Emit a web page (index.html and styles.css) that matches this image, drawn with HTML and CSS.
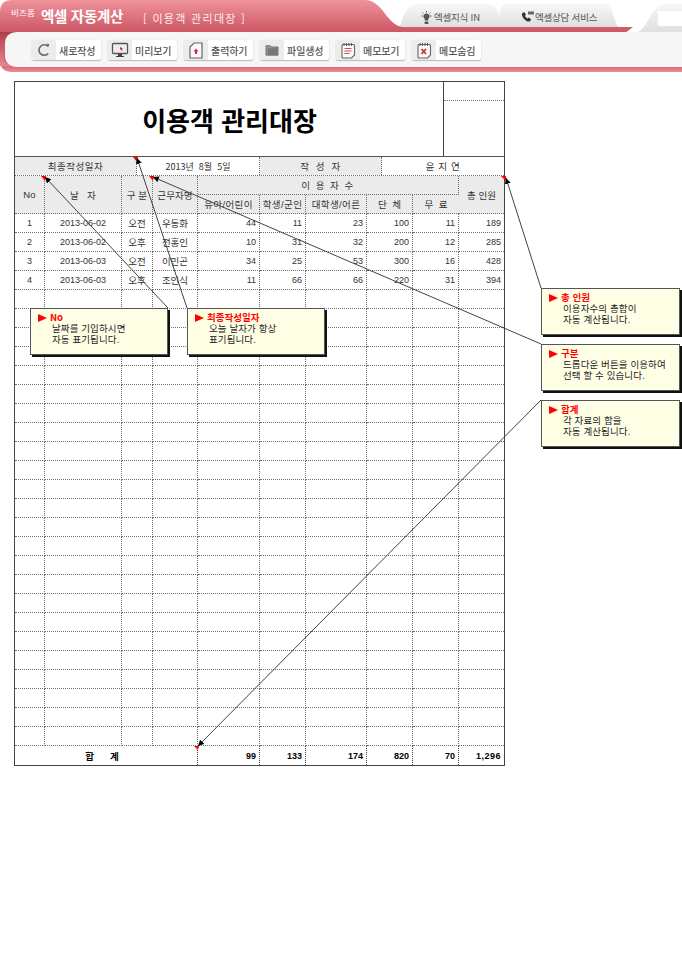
FILE: index.html
```html
<!DOCTYPE html>
<html lang="ko">
<head>
<meta charset="utf-8">
<title>이용객 관리대장</title>
<link rel="stylesheet" href="styles.css">
</head>
<body>
<header class="top">
  <svg class="top-bg" width="682" height="72" viewBox="0 0 682 72">
    <defs>
      <linearGradient id="red" x1="0" y1="0" x2="0" y2="1">
        <stop offset="0" stop-color="#f0939b"/>
        <stop offset="0.42" stop-color="#cd5a66"/>
        <stop offset="0.9" stop-color="#d4626d"/>
        <stop offset="1" stop-color="#e98d95"/>
      </linearGradient>
      <linearGradient id="tab" x1="0" y1="0" x2="0" y2="1">
        <stop offset="0" stop-color="#f8f8f8"/>
        <stop offset="1" stop-color="#dfdfdf"/>
      </linearGradient>
      <linearGradient id="edge" x1="0" y1="0" x2="0" y2="1">
        <stop offset="0" stop-color="#ad3f4a"/>
        <stop offset="1" stop-color="#e58790"/>
      </linearGradient>
    </defs>
    <path d="M635 33 C650 30 648 4 668 4 H682 V33 Z" fill="url(#tab)"/>
    <path d="M398 27 C403 26 402 6 416 4 H490 C498 5 497 12 505 27 Z" fill="url(#tab)"/>
    <path d="M502 27 C499 12 498 7 506 4 H606 C612 5 614 20 618 27 Z" fill="url(#tab)"/>
    <path d="M12 0 H366 C384 2 386 24 402 27 H633 L625 33 H682 V72 H12 Q0 72 0 60 V12 Q0 0 12 0 Z" fill="url(#red)"/>
    <path d="M0 32 H18 Q4 33 4 46 V58 Q4 66 18 66 H0 Z" fill="url(#edge)"/>
    <path d="M18 32 H682 V67 H18 Q5 67 5 55 V44 Q5 32 18 32 Z" fill="#f5f6f5"/>
  </svg>
  <div class="top-row">
    <span class="brand-small">비즈폼</span>
    <strong class="brand">엑셀 자동계산</strong>
    <span class="page-name">[ 이용객 관리대장 ]</span>
    <nav class="tabs">
      <a class="tab tab-first">
        <svg width="11" height="13" viewBox="0 0 11 13"><path d="M5.5 2.5a3 3 0 0 0-1.7 5.5v1.5h3.4V8a3 3 0 0 0-1.700-5.500Z" fill="#555"/><path d="M4 11h3v1.500H4ZM5.500 0v1.500M0.500 5h1.500M9 5h1.500M1.500 1.500l1 1M9.500 1.500l-1 1" stroke="#555" fill="#555"/></svg>
        엑셀지식 IN
      </a>
      <a class="tab tab-second">
        <svg width="14" height="12" viewBox="0 0 14 12"><path d="M1 2.500 3 1l2 2.500-1 1.200c.6 1.300 1.400 2.200 2.600 2.900l1.200-1 2.400 2-1.500 2C5 11 .5 6.500 1 2.500Z" fill="#333"/><rect x="7" y="0.500" width="6" height="3" fill="#666"/></svg>
        엑셀상담 서비스
      </a>
    </nav>
    <span class="search-box"></span>
  </div>
  <nav class="toolbar">
    <a class="tool">
      <span class="tool-icon"><svg width="14" height="14" viewBox="0 0 16 16"><path d="M12.500 3.800A6 6 0 1 0 12.800 12" fill="none" stroke="#666" stroke-width="1.800"/><path d="M10.500 0.800 13.800 1v3.600Z" fill="#666"/></svg></span>
      <span class="tool-label">새로작성</span>
    </a>
    <a class="tool">
      <span class="tool-icon"><svg width="18" height="16" viewBox="0 0 18 16"><rect x="1.500" y="1.500" width="15" height="10" rx="1" fill="#eee" stroke="#555" stroke-width="1.300"/><path d="M9 5l3 1.500-1 .5.500 1.500-1 .3-.6-1.500-.9.700Z" fill="#c8323f"/><path d="M7 12h4v2h2v1H5v-1h2Z" fill="#444"/></svg></span>
      <span class="tool-label">미리보기</span>
    </a>
    <a class="tool">
      <span class="tool-icon"><svg width="14" height="17" viewBox="0 0 14 17"><path d="M5 1h8v15H1V5Z" fill="#fafafa" stroke="#666" stroke-width="1.200"/><path d="M7 6.500l2.500 3H8V12H6V9.500H4.500Z" fill="#c8323f"/></svg></span>
      <span class="tool-label">출력하기</span>
    </a>
    <a class="tool">
      <span class="tool-icon"><svg width="14" height="12" viewBox="0 0 16 14"><path d="M1 2h5l1.500 1.500H15V13H1Z" fill="#999" stroke="#666"/><rect x="3" y="5" width="12" height="8" fill="#777"/></svg></span>
      <span class="tool-label">파일생성</span>
    </a>
    <a class="tool">
      <span class="tool-icon"><svg width="16" height="17" viewBox="0 0 16 17"><path d="M3 2.500h10.500q1 0 1 1V13l-3 3H3q-1 0-1-1V3.500q0-1 1-1Z" fill="#fafafa" stroke="#666" stroke-width="1.100"/><path d="M4 1v3M6.500 1v3M9 1v3M11.500 1v3" stroke="#555"/><path d="M4.500 6.500h7M4.500 9h7M4.500 11.500h5" stroke="#d2505c" stroke-width="1.100"/></svg></span>
      <span class="tool-label">메모보기</span>
    </a>
    <a class="tool">
      <span class="tool-icon"><svg width="16" height="17" viewBox="0 0 16 17"><path d="M3 2.500h10.500q1 0 1 1V13l-3 3H3q-1 0-1-1V3.500q0-1 1-1Z" fill="#fafafa" stroke="#666" stroke-width="1.100"/><path d="M4 1v3M6.500 1v3M9 1v3M11.500 1v3" stroke="#555"/><path d="M5.500 7l4.500 5M10 7l-4.500 5" stroke="#c8323f" stroke-width="1.800"/></svg></span>
      <span class="tool-label">메모숨김</span>
    </a>
  </nav>
</header>

<main class="sheet">
  <div class="title-block">
    <h1 class="title">이용객 관리대장</h1>
    <div class="stamp"><div class="stamp-top"></div><div class="stamp-bottom"></div></div>
  </div>
  <div class="meta">
    <div class="meta-label">최종작성일자</div>
    <div class="meta-value meta-date">2013년 &nbsp;8월 &nbsp;5일</div>
    <div class="meta-label">작 &nbsp;성 &nbsp;자</div>
    <div class="meta-value spaced">윤 지 연</div>
  </div>
  <table class="ledger">
    <colgroup>
      <col class="c-no"><col class="c-date"><col class="c-kind"><col class="c-staff"><col class="c-kid"><col class="c-stu"><col class="c-adult"><col class="c-group"><col class="c-free"><col class="c-total">
    </colgroup>
    <thead>
      <tr>
        <th rowspan="2">No</th><th rowspan="2">날 &nbsp; 자</th><th rowspan="2">구 분</th><th rowspan="2">근무자명</th>
        <th colspan="5" class="wide">이 용 자 수</th><th rowspan="2">총 인원</th>
      </tr>
      <tr><th class="tight">유아/어린이</th><th class="tight">학생/군인</th><th class="tight">대학생/어른</th><th>단 &nbsp;체</th><th>무 &nbsp;료</th></tr>
    </thead>
    <tbody>
      <tr><td class="ctr">1</td><td class="ctr">2013-06-02</td><td class="ctr kr">오전</td><td class="ctr kr">우동화</td><td>44</td><td>11</td><td>23</td><td>100</td><td>11</td><td>189</td></tr>
      <tr><td class="ctr">2</td><td class="ctr">2013-06-02</td><td class="ctr kr">오후</td><td class="ctr kr">전홍인</td><td>10</td><td>31</td><td>32</td><td>200</td><td>12</td><td>285</td></tr>
      <tr><td class="ctr">3</td><td class="ctr">2013-06-03</td><td class="ctr kr">오전</td><td class="ctr kr">이민곤</td><td>34</td><td>25</td><td>53</td><td>300</td><td>16</td><td>428</td></tr>
      <tr><td class="ctr">4</td><td class="ctr">2013-06-03</td><td class="ctr kr">오후</td><td class="ctr kr">조인식</td><td>11</td><td>66</td><td>66</td><td>220</td><td>31</td><td>394</td></tr>
      <tr><td></td><td></td><td></td><td></td><td></td><td></td><td></td><td></td><td></td><td></td></tr>
      <tr><td></td><td></td><td></td><td></td><td></td><td></td><td></td><td></td><td></td><td></td></tr>
      <tr><td></td><td></td><td></td><td></td><td></td><td></td><td></td><td></td><td></td><td></td></tr>
      <tr><td></td><td></td><td></td><td></td><td></td><td></td><td></td><td></td><td></td><td></td></tr>
      <tr><td></td><td></td><td></td><td></td><td></td><td></td><td></td><td></td><td></td><td></td></tr>
      <tr><td></td><td></td><td></td><td></td><td></td><td></td><td></td><td></td><td></td><td></td></tr>
      <tr><td></td><td></td><td></td><td></td><td></td><td></td><td></td><td></td><td></td><td></td></tr>
      <tr><td></td><td></td><td></td><td></td><td></td><td></td><td></td><td></td><td></td><td></td></tr>
      <tr><td></td><td></td><td></td><td></td><td></td><td></td><td></td><td></td><td></td><td></td></tr>
      <tr><td></td><td></td><td></td><td></td><td></td><td></td><td></td><td></td><td></td><td></td></tr>
      <tr><td></td><td></td><td></td><td></td><td></td><td></td><td></td><td></td><td></td><td></td></tr>
      <tr><td></td><td></td><td></td><td></td><td></td><td></td><td></td><td></td><td></td><td></td></tr>
      <tr><td></td><td></td><td></td><td></td><td></td><td></td><td></td><td></td><td></td><td></td></tr>
      <tr><td></td><td></td><td></td><td></td><td></td><td></td><td></td><td></td><td></td><td></td></tr>
      <tr><td></td><td></td><td></td><td></td><td></td><td></td><td></td><td></td><td></td><td></td></tr>
      <tr><td></td><td></td><td></td><td></td><td></td><td></td><td></td><td></td><td></td><td></td></tr>
      <tr><td></td><td></td><td></td><td></td><td></td><td></td><td></td><td></td><td></td><td></td></tr>
      <tr><td></td><td></td><td></td><td></td><td></td><td></td><td></td><td></td><td></td><td></td></tr>
      <tr><td></td><td></td><td></td><td></td><td></td><td></td><td></td><td></td><td></td><td></td></tr>
      <tr><td></td><td></td><td></td><td></td><td></td><td></td><td></td><td></td><td></td><td></td></tr>
      <tr><td></td><td></td><td></td><td></td><td></td><td></td><td></td><td></td><td></td><td></td></tr>
      <tr><td></td><td></td><td></td><td></td><td></td><td></td><td></td><td></td><td></td><td></td></tr>
      <tr><td></td><td></td><td></td><td></td><td></td><td></td><td></td><td></td><td></td><td></td></tr>
      <tr><td></td><td></td><td></td><td></td><td></td><td></td><td></td><td></td><td></td><td></td></tr>
    </tbody>
    <tfoot>
      <tr><td colspan="4" class="ctr sum-label">합 &nbsp; &nbsp; &nbsp;계</td><td>99</td><td>133</td><td>174</td><td>820</td><td>70</td><td class="grand">1,296</td></tr>
    </tfoot>
  </table>
</main>

<svg class="leaders" width="682" height="962" viewBox="0 0 682 962">
  <defs>
    <marker id="head" markerWidth="7" markerHeight="7" refX="6" refY="3" orient="auto" markerUnits="userSpaceOnUse">
      <path d="M0 0 6 3 0 6Z" fill="#000"/>
    </marker>
  </defs>
  <path d="M41 176h5l-1 5ZM133 157h5l-1 5ZM149 176h5l-1 5ZM501 176h5v5ZM194 746h5l-1 4Z" fill="#f00"/>
  <g stroke="#444" stroke-width="1" fill="none" marker-end="url(#head)">
    <line x1="168" y1="308" x2="45" y2="177"/>
    <line x1="187" y1="308" x2="137" y2="158"/>
    <line x1="541" y1="344" x2="153" y2="177"/>
    <line x1="541" y1="288" x2="506" y2="178"/>
    <line x1="541" y1="400" x2="198" y2="746"/>
  </g>
</svg>

<aside class="note note-no"><b class="note-title">No</b><p>날짜를 기입하시면<br>자동 표기됩니다.</p></aside>
<aside class="note note-date"><b class="note-title">최종작성일자</b><p>오늘 날자가 항상<br>표기됩니다.</p></aside>
<aside class="note note-total"><b class="note-title">총 인원</b><p>이용자수의 총합이<br>자동 계산됩니다.</p></aside>
<aside class="note note-kind"><b class="note-title">구분</b><p>드롭다운 버튼을 이용하여<br>선택 할 수 있습니다.</p></aside>
<aside class="note note-sum"><b class="note-title">합계</b><p>각 자료의 합을<br>자동 계산됩니다.</p></aside>
</body>
</html>
```
FILE: styles.css
```css
* { box-sizing: border-box; }
html, body { margin: 0; padding: 0; background: #fff; }
body {
  position: relative;
  width: 682px;
  height: 962px;
  overflow: hidden;
  font-family: "Liberation Sans", "Noto Sans CJK KR", sans-serif;
  font-size: 9px;
  color: #222;
}

/* header */
.top { position: relative; height: 72px; }
.top-bg { position: absolute; left: 0; top: 0; }
.top-row {
  position: relative;
  display: flex;
  align-items: center;
  height: 32px;
  padding-left: 11px;
  color: #fff;
}
.brand-small { font-size: 8.500px; width: 30px; margin-top: -9px; color: #fff; letter-spacing: 0.2px; }
.brand { font-family: "Noto Sans CJK KR", sans-serif; font-size: 14.500px; font-weight: 700; width: 102px; margin-top: -1px; letter-spacing: -0.3px; }
.page-name { font-family: "Noto Sans CJK KR", sans-serif; font-size: 11px; letter-spacing: 1.300px; width: 250px; margin-top: 3px; color: #fdecee; white-space: nowrap; }
.tabs { display: flex; color: #555; font-family: "Noto Sans CJK KR", sans-serif; font-size: 9.500px; margin-top: 2px; }
.tab { display: flex; align-items: center; gap: 2px; letter-spacing: -0.2px; }
.tab-first { width: 102px; padding-left: 28px; }
.tab-second { width: 122px; padding-left: 26px; gap: 0; }
.search-box { width: 24px; height: 15px; background: #fff; margin-left: 41px; margin-top: 5px; }

.toolbar {
  position: relative;
  display: flex;
  gap: 7.500px;
  padding: 8px 0 0 32px;
}
.tool {
  display: flex;
  align-items: center;
  width: 68.500px;
  height: 20px;
  background: #fff;
  border-radius: 2px;
  box-shadow: 0 1px 1px #bbb, 0 0 1px #ccc;
}
.tool-icon {
  display: flex;
  align-items: center;
  justify-content: center;
  width: 24px;
  height: 20px;
  background: #ececec;
  border-radius: 2px 0 0 2px;
}
.tool-label {
  flex: 1;
  text-align: center;
  font-family: "Noto Sans CJK KR", sans-serif;
  font-size: 10px;
  font-weight: 500;
  color: #555;
  letter-spacing: -0.1px;
  padding-right: 2px;
}

/* sheet */
.sheet { width: 491px; margin: 9px 0 0 14px; border: 1px solid #444; }
.title-block { display: flex; height: 75px; border-bottom: 1px solid #555; }
.title {
  flex: 1;
  margin: 0;
  font-family: "Noto Sans CJK KR", sans-serif;
  font-size: 26px;
  font-weight: 700;
  line-height: 75px;
  text-align: center;
  color: #000;
  padding-left: 1px;
}
.stamp { width: 61px; border-left: 1px solid #444; }
.stamp-top { height: 19px; border-bottom: 1px dotted #707070; }
.meta { display: grid; grid-template-columns: 122px 123px 122px 122px; height: 19px; border-bottom: 1px dotted #707070; }
.meta > div { display: flex; align-items: center; justify-content: center; font-family: "Noto Sans CJK KR", "Liberation Sans", sans-serif; font-size: 9.500px; color: #333; border-right: 1px dotted #707070; }
.meta > div:last-child { border-right: 0; }
.meta-label { background: #ebebeb; letter-spacing: 0.5px; }
.meta > .meta-date { font-size: 9px; background: #fff; }
.spaced { letter-spacing: 0.6px; }

.ledger { border-collapse: separate; border-spacing: 0; table-layout: fixed; width: 489px; }
.c-no { width: 30px; }
.c-date { width: 77px; }
.c-kind { width: 31px; }
.c-staff { width: 45px; }
.c-kid { width: 62px; }
.c-stu { width: 46px; }
.c-adult { width: 61px; }
.c-group { width: 46px; }
.c-free { width: 46px; }
.c-total { width: 45px; }
.ledger th, .ledger td {
  height: 19px;
  padding: 0;
  border-right: 1px dotted #707070;
  border-bottom: 1px dotted #707070;
  overflow: hidden;
  white-space: nowrap;
}
.ledger tr > :last-child { border-right: 0; }
.ledger th {
  background: #ebebeb;
  font-family: "Liberation Sans", "Noto Sans CJK KR", sans-serif;
  font-size: 9.500px;
  font-weight: 400;
  color: #333;
  letter-spacing: 0.1px;
}
.ledger .wide { letter-spacing: 1.500px; }
.ledger .tight { letter-spacing: 0.400px; }
.ledger td {
  text-align: right;
  padding-right: 3px;
  color: #333;
}
.ledger td.ctr { text-align: center; padding-right: 0; }
.ledger td.kr { font-size: 9.500px; }
.ledger tfoot td {
  height: 19px;
  border-bottom: 0;
  border-right: 1px dotted #444;
  font-weight: 700;
  color: #000;
}
.ledger tfoot .grand { letter-spacing: 0.500px; }
.ledger tfoot .sum-label { font-family: "Noto Sans CJK KR", sans-serif; font-size: 9.500px; padding-right: 8px; }

/* leader lines and memo notes */
.leaders { position: absolute; left: 0; top: 0; pointer-events: none; }
.note {
  position: absolute;
  width: 139px;
  height: 47px;
  padding: 3px 0 0 7px;
  background: #ffffe6;
  border: 1px solid #555;
  box-shadow: 2px 2px 0 #111;
  font-family: "Noto Sans CJK KR", sans-serif;
  font-size: 9.500px;
  line-height: 11px;
  color: #222;
}
.note-title { display: flex; align-items: center; gap: 3px; color: #f00; font-weight: 700; }
.note-title::before {
  content: "";
  width: 0;
  height: 0;
  border-left: 9px solid #f00;
  border-top: 4.500px solid transparent;
  border-bottom: 4.500px solid transparent;
}
.note p { margin: 0 0 0 14px; letter-spacing: 0.1px; }
.note-no { left: 30px; top: 308px; width: 138px; }
.note-date { left: 187px; top: 308px; width: 138px; }
.note-total { left: 541px; top: 288px; }
.note-kind { left: 541px; top: 344px; }
.note-sum { left: 541px; top: 400px; }
```
